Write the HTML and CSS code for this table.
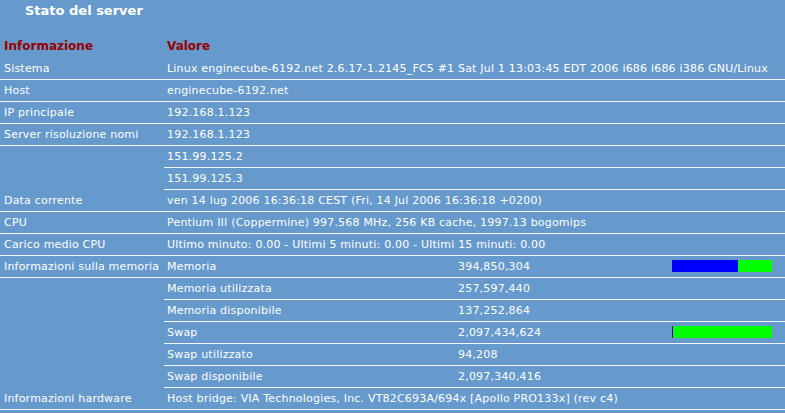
FILE: index.html
```html
<!DOCTYPE html>
<html>
<head>
<meta charset="utf-8">
<title>Stato del server</title>
<link rel="stylesheet" href="styles.css">
</head>
<body>
<div class="title">Stato del server</div>
<table class="info">
  <colgroup><col class="c1"><col class="c2"><col class="c3"><col class="c4"></colgroup>
  <tr class="head"><th class="lbl">Informazione</th><th colspan="3">Valore</th></tr>
  <tr><td class="lbl">Sistema</td><td colspan="3">Linux enginecube-6192.net 2.6.17-1.2145_FC5 #1 Sat Jul 1 13:03:45 EDT 2006 i686 i686 i386 GNU/Linux</td></tr>
  <tr><td class="lbl">Host</td><td colspan="3">enginecube-6192.net</td></tr>
  <tr><td class="lbl">IP principale</td><td colspan="3">192.168.1.123</td></tr>
  <tr><td class="lbl">Server risoluzione nomi</td><td colspan="3">192.168.1.123</td></tr>
  <tr><td class="empty"></td><td colspan="3">151.99.125.2</td></tr>
  <tr><td class="empty"></td><td colspan="3">151.99.125.3</td></tr>
  <tr><td class="lbl">Data corrente</td><td colspan="3">ven 14 lug 2006 16:36:18 CEST (Fri, 14 Jul 2006 16:36:18 +0200)</td></tr>
  <tr><td class="lbl">CPU</td><td colspan="3">Pentium III (Coppermine) 997.568 MHz, 256 KB cache, 1997.13 bogomips</td></tr>
  <tr><td class="lbl">Carico medio CPU</td><td colspan="3">Ultimo minuto: 0.00 - Ultimi 5 minuti: 0.00 - Ultimi 15 minuti: 0.00</td></tr>
  <tr><td class="lbl">Informazioni sulla memoria</td><td>Memoria</td><td>394,850,304</td><td class="barcell"><div class="bar"><span class="used" style="width:66px"></span></div></td></tr>
  <tr><td class="empty"></td><td>Memoria utilizzata</td><td>257,597,440</td><td></td></tr>
  <tr><td class="empty"></td><td>Memoria disponibile</td><td>137,252,864</td><td></td></tr>
  <tr><td class="empty"></td><td>Swap</td><td>2,097,434,624</td><td class="barcell"><div class="bar"><span class="used" style="width:1px"></span></div></td></tr>
  <tr><td class="empty"></td><td>Swap utilizzato</td><td>94,208</td><td></td></tr>
  <tr><td class="empty"></td><td>Swap disponibile</td><td>2,097,340,416</td><td></td></tr>
  <tr><td class="lbl">Informazioni hardware</td><td colspan="3">Host bridge: VIA Technologies, Inc. VT82C693A/694x [Apollo PRO133x] (rev c4)</td></tr>
</table>
</body>
</html>
```
FILE: styles.css
```css
html, body {
  margin: 0;
  padding: 0;
  background: #6699cc;
}
body {
  font-family: "DejaVu Sans", Verdana, sans-serif;
  font-size: 11px;
  color: #ffffff;
}
.title {
  height: 36px;
  padding: 3px 0 0 25px;
  box-sizing: border-box;
  font-size: 13px;
  font-weight: bold;
  color: #ffffff;
}
.info {
  width: 785px;
  table-layout: fixed;
  border-collapse: collapse;
  border-spacing: 0;
}
.c1 { width: 164px; }
.c2 { width: 291px; }
.c3 { width: 214px; }
.c4 { width: 116px; }
.info td, .info th {
  height: 21px;
  padding: 0 0 0 3px;
  line-height: 21px;
  text-align: left;
  vertical-align: middle;
  white-space: nowrap;
  overflow: hidden;
  letter-spacing: 0.2px;
  border-bottom: 1px solid #f4f4f4;
}
.info td.lbl, .info th.lbl {
  padding-left: 4px;
}
.info td.empty {
  border-bottom: 1px solid transparent;
}
.info tr.head th {
  font-size: 12px;
  font-weight: bold;
  letter-spacing: 0;
  color: #990000;
  border-bottom: 1px solid transparent;
}
.bar {
  width: 100px;
  height: 12px;
  background: #00ff00;
  display: flex;
  margin-top: -1px;
}
.bar .used {
  display: block;
  height: 12px;
  background: #0000ff;
}
```
